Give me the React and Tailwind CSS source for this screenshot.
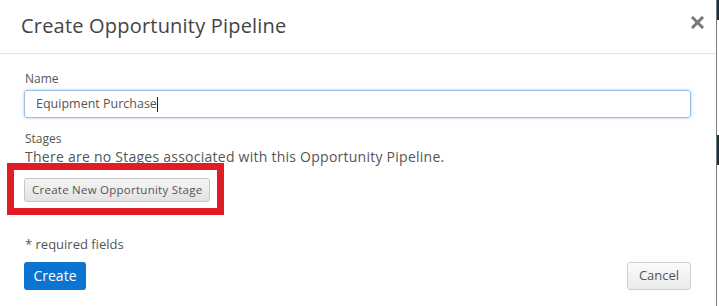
import React from 'react'

export default function App() {
  return (
    <div className="relative w-[719px] h-[306px] bg-white overflow-hidden flex font-['Open_Sans',sans-serif] text-[#555]">
      <div className="w-[717px] h-full border-r border-[#7d7d7d] flex flex-col">
        {/* Header */}
        <div className="h-[54px] shrink-0 border-b border-[#e3e3e3] flex items-center justify-between pl-[21px] pr-[12px]">
          <h2 className="text-[20px] tracking-[0.2px] text-[#444] leading-none pb-[2px]">Create Opportunity Pipeline</h2>
          <svg width="13" height="13" viewBox="0 0 13 13" className="mb-[8px]">
            <path d="M2 2 L11 11 M11 2 L2 11" stroke="#777" strokeWidth="3" strokeLinecap="square" />
          </svg>
        </div>

        {/* Body */}
        <div className="flex flex-col px-[24px] pt-[17px]">
          <label className="text-[12px] leading-[16px] pl-[1px]">Name</label>
          <div className="mt-[3px] w-[667px] h-[28px] rounded-[3px] border border-[#9dc1e4] shadow-[0_0_3px_rgba(102,160,220,0.6)] flex items-center pl-[11px] text-[12.5px] text-[#555]">
            Equipment Purchase<span className="w-px h-[15px] bg-[#222]" />
          </div>

          <label className="mt-[13px] text-[12px] leading-[16px] pl-[1px]">Stages</label>
          <p className="text-[14px] tracking-[0.25px] leading-[20px] pl-[1px]">There are no Stages associated with this Opportunity Pipeline.</p>
          <div className="mt-[9px]">
            <button className="h-[24px] px-[7px] rounded-[3px] border border-[#c6c6c6] bg-gradient-to-b from-[#f6f6f6] to-[#e2e2e2] text-[11.5px] tracking-[0.25px] text-[#555]">
              Create New Opportunity Stage
            </button>
          </div>

          <p className="mt-[34px] text-[13px] leading-[17px] pl-[1px]">* required fields</p>
          <div className="mt-[9px] flex items-center justify-between w-[667px]">
            <button className="h-[28px] w-[62px] rounded-[3px] bg-[#0b74d1] text-white text-[14px]">Create</button>
            <button className="h-[28px] w-[64px] rounded-[3px] border border-[#cfcfcf] bg-gradient-to-b from-[#fafafa] to-[#ececec] text-[13px] text-[#555]">Cancel</button>
          </div>
        </div>
      </div>

      {/* page behind the modal */}
      <div className="flex-1 flex flex-col">
        <div className="h-[20px] bg-[#12333d]" />
        <div className="h-[115px] bg-white" />
        <div className="h-[30px] bg-[#12333d]" />
        <div className="flex-1 bg-white" />
      </div>

      {/* annotation */}
      <div className="absolute left-[7px] top-[163px] w-[217px] h-[52px] border-[7px] border-[#e21b25]" />
    </div>
  )
}
